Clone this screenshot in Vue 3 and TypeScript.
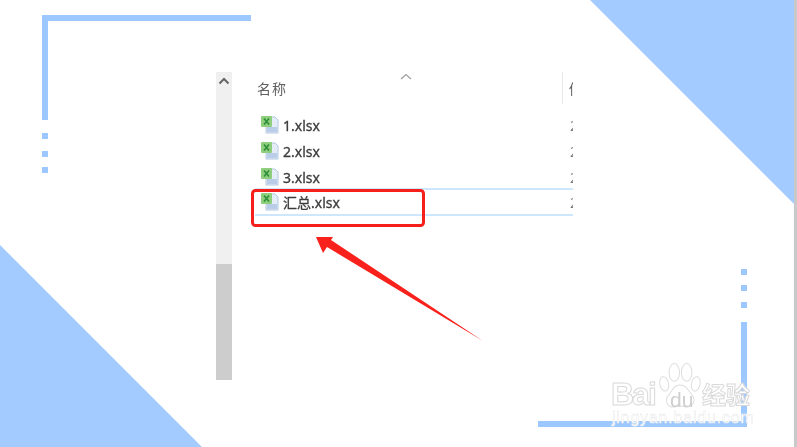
<script setup lang="ts">
interface FileRow { name: string; selected: boolean; mark: string }
const files: FileRow[] = [
  { name: '1.xlsx', selected: false, mark: '2' },
  { name: '2.xlsx', selected: false, mark: '2' },
  { name: '3.xlsx', selected: false, mark: '2' },
  { name: '汇总.xlsx', selected: true, mark: '2' },
]
</script>

<template>
  <div class="slide">
    <svg class="deco" width="797" height="447" viewBox="0 0 797 447">
      <polygon points="590,0 794,0 794,204" fill="#a3cbff" />
      <polygon points="0,245 0,447 202,447" fill="#a3cbff" />
      <g fill="#9cc8ff">
        <path d="M42 15H251V21H48V120H42Z" />
        <rect x="42" y="133" width="6" height="6" />
        <rect x="42" y="151" width="6" height="6" />
        <rect x="42" y="167" width="6" height="6" />
        <path d="M741 322H747V427H538V421H741Z" />
        <rect x="741" y="269" width="6" height="6" />
        <rect x="741" y="285" width="6" height="6" />
        <rect x="741" y="302" width="6" height="6" />
      </g>
      <rect x="794" y="0" width="3" height="447" fill="#c9c9c9" />
    </svg>

    <div class="explorer">
      <div class="scrollbar">
        <svg class="scroll-up" width="12" height="8" viewBox="0 0 12 8">
          <path d="M1.5 6.5L6 2L10.5 6.5" fill="none" stroke="#666" stroke-width="2" />
        </svg>
        <div class="thumb"></div>
      </div>
      <div class="list">
        <div class="head">
          <span class="head-name">名称</span>
          <svg class="sort" width="12" height="7" viewBox="0 0 12 7">
            <path d="M1 6L6 1.5L11 6" fill="none" stroke="#a0a0a0" stroke-width="1.3" />
          </svg>
          <span class="head-next">修</span>
        </div>
        <div class="rows">
          <div v-for="f in files" :key="f.name" class="row" :class="{ selected: f.selected }">
            <svg class="file-icon" width="19" height="19" viewBox="0 0 19 19">
              <path d="M6 2H15L18 5V18H6Z" fill="#e3ecf7" stroke="#b4c8e2" />
              <rect x="7" y="12" width="10" height="5" fill="#b9cde8" />
              <rect x="1" y="1" width="11" height="11" rx="1" fill="#8fce7c" />
              <path d="M4 3.500L9 9.500M9 3.500L4 9.500" stroke="#2f8f3a" stroke-width="1.700" />
            </svg>
            <span class="file-name">{{ f.name }}</span>
            <span class="file-mark">{{ f.mark }}</span>
          </div>
        </div>
      </div>
    </div>

    <svg class="callout" width="797" height="447" viewBox="0 0 797 447">
      <rect x="252.500" y="190.500" width="171" height="35" rx="3" fill="none" stroke="#f5201c" stroke-width="3" />
      <polygon points="316,237 333,237 331,240 483,341 327,247 323,253" fill="#f8211b" />
    </svg>

    <div class="watermark">
      <svg class="paw" width="42" height="48" viewBox="0 0 44 46" preserveAspectRatio="none">
        <g fill="#fff" stroke="#dcdcdc" stroke-width="1">
          <ellipse cx="5.500" cy="21" rx="4.500" ry="7" transform="rotate(-14 5.500 21)" />
          <ellipse cx="16" cy="10" rx="5.500" ry="8.500" />
          <ellipse cx="29" cy="10" rx="5.500" ry="8.500" />
          <ellipse cx="38.500" cy="21" rx="4.500" ry="7" transform="rotate(14 38.500 21)" />
          <path d="M22 22C29 22 31 28 35 32C39 37 35 44 28 43C24 42 20 42 16 43C9 44 5 37 10 32C14 28 15 22 22 22Z" />
        </g>
      </svg>
      <span class="wm-bai">Bai</span>
      <span class="wm-du">du</span>
      <span class="wm-jy">经验</span>
      <span class="wm-url">jingyan.baidu.com</span>
    </div>
  </div>
</template>

<style scoped>
.slide {
  position: relative;
  width: 797px;
  height: 447px;
  overflow: hidden;
  background: #fff;
  font-family: "Noto Sans", "Noto Sans CJK SC", sans-serif;
}
.deco,
.callout {
  position: absolute;
  left: 0;
  top: 0;
}
.deco {
  filter: blur(0.4px);
}
.callout {
  filter: blur(0.5px);
}
.explorer {
  position: absolute;
  left: 216px;
  top: 72px;
  width: 357px;
  height: 308px;
  display: flex;
  overflow: hidden;
  filter: blur(0.7px);
}
.scrollbar {
  width: 16px;
  flex: none;
  background: #f0f0f0;
  display: flex;
  flex-direction: column;
  align-items: center;
  justify-content: space-between;
  padding-top: 5px;
  box-sizing: border-box;
}
.scroll-up {
  display: block;
}
.thumb {
  width: 100%;
  height: 116px;
  background: #cdcdcd;
}
.list {
  flex: 1;
  min-width: 0;
  padding-left: 23px;
}
.head {
  height: 32px;
  display: flex;
  align-items: center;
  color: #5f5f5f;
  font-size: 14px;
  padding-left: 2px;
  white-space: nowrap;
}
.head-name {
  flex: none;
  width: 143px;
  letter-spacing: 1px;
  font-family: "Noto Sans CJK SC", sans-serif;
}
.sort {
  flex: none;
  align-self: flex-start;
  margin-top: 1px;
}
.head-next {
  flex: none;
  margin-left: 150px;
  padding-left: 6px;
  height: 32px;
  line-height: 32px;
  border-left: 1px solid #e8e8e8;
  box-sizing: border-box;
  font-family: "Noto Sans CJK SC", sans-serif;
}
.rows {
  padding-top: 8px;
}
.row {
  height: 26px;
  display: flex;
  align-items: center;
  padding-left: 5px;
  box-sizing: border-box;
  color: #3c3c3c;
  font-size: 14px;
  position: relative;
}
.row.selected {
  height: 28px;
  margin-top: -2px;
  border-top: 2px solid #cfe7fd;
  border-bottom: 2px solid #cfe7fd;
  background: #fff;
}
.file-icon {
  flex: none;
  margin-top: -2px;
}
.file-name {
  margin-left: 4px;
  -webkit-text-stroke: 0.3px #3c3c3c;
}
.file-mark {
  position: absolute;
  left: 315px;
  color: #7a7a7a;
}
.watermark {
  position: absolute;
  left: 611px;
  top: 360px;
  width: 145px;
  height: 68px;
  color: #fff;
  filter: blur(0.5px);
}
.paw {
  position: absolute;
  left: 48px;
  top: 2px;
}
.wm-bai,
.wm-du,
.wm-jy {
  position: absolute;
  font-family: "Liberation Sans", sans-serif;
  font-weight: 700;
  -webkit-text-stroke: 1px #d9d9d9;
  color: #fff;
  line-height: 1;
}
.wm-bai {
  left: 0;
  top: 18px;
  font-size: 32px;
  letter-spacing: -2px;
}
.wm-du {
  left: 59px;
  top: 29px;
  font-size: 21px;
  -webkit-text-stroke: 0;
  color: #cfcfcf;
  font-weight: 400;
}
.wm-jy {
  left: 91px;
  top: 22px;
  font-size: 24px;
  letter-spacing: 0;
  font-family: "Noto Sans CJK SC", sans-serif;
}
.wm-url {
  position: absolute;
  left: 1px;
  top: 49px;
  font-family: "Liberation Sans", sans-serif;
  font-size: 16px;
  letter-spacing: 0.8px;
  white-space: nowrap;
  color: #fff;
  -webkit-text-stroke: 0.3px #dedede;
  text-shadow: 0 0 2px #fff;
  line-height: 18px;
}
</style>
